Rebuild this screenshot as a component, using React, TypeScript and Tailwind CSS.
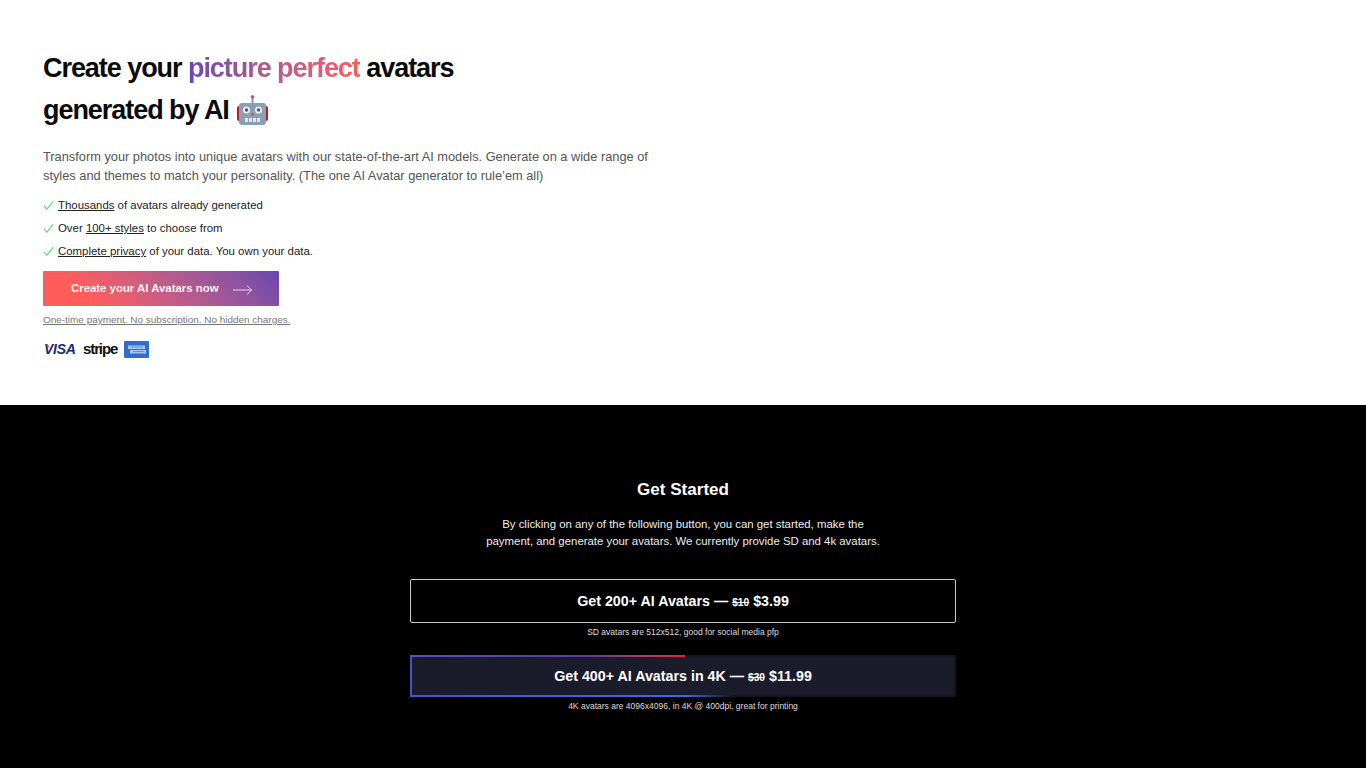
import React from "react";

function Check() {
  return (
    <svg className="w-[11px] h-[11px] shrink-0" viewBox="0 0 12 12" fill="none" stroke="#4ade80" strokeWidth="1.1">
      <path d="M1 6.5 L4.3 10 L11 1.5" />
    </svg>
  );
}

function Visa() {
  return (
    <span className="relative block w-[32px] h-[14px] text-[14px] leading-[14px] font-bold italic tracking-[-0.3px] text-[#1a2a6c]">
      VISA
      <svg width="6" height="5" viewBox="0 0 6 5" className="absolute left-0 top-[2px]">
        <path d="M0 0.5 H4 L6 4.5 C4.5 2.5 2.5 1.2 0 0.5 Z" fill="#c9433c" />
      </svg>
    </span>
  );
}

function Amex() {
  return (
    <svg width="25" height="17" viewBox="0 0 25 17" className="block">
      <rect width="25" height="17" rx="1" fill="#2f6fc9" />
      <rect x="4" y="4.5" width="17" height="3.5" fill="#a9c6ee" />
      <rect x="6" y="9" width="16" height="3.5" fill="#a9c6ee" />
      <rect x="7" y="5.5" width="12" height="1" fill="#5f90d8" />
      <rect x="9" y="10" width="11" height="1" fill="#5f90d8" />
    </svg>
  );
}

function Robot() {
  return (
    <svg width="33" height="32" viewBox="0 0 33 32" className="inline-block align-middle">
      <rect x="15.5" y="3" width="2" height="7" fill="#8899a6" />
      <circle cx="16.5" cy="3" r="2" fill="#8899a6" />
      <circle cx="16.5" cy="3" r="1" fill="#dd2e44" />
      <rect x="1" y="12" width="4" height="15" rx="2" fill="#be1931" />
      <rect x="28" y="12" width="4" height="15" rx="2" fill="#be1931" />
      <rect x="3" y="9" width="27" height="22" rx="3" fill="#8a9fb0" />
      <circle cx="10.5" cy="16" r="3.6" fill="#e8eef2" />
      <circle cx="22.5" cy="16" r="3.6" fill="#e8eef2" />
      <circle cx="10.5" cy="16" r="1.7" fill="#4b5c68" />
      <circle cx="22.5" cy="16" r="1.7" fill="#4b5c68" />
      <path d="M15 21.5 L16.5 18.5 L18 21.5 Z" fill="#dd2e44" />
      <rect x="9" y="24" width="15" height="4" fill="#dfe7ec" />
      <rect x="12" y="24" width="1" height="4" fill="#8a9fb0" />
      <rect x="16" y="24" width="1" height="4" fill="#8a9fb0" />
      <rect x="20" y="24" width="1" height="4" fill="#8a9fb0" />
    </svg>
  );
}

export default function App() {
  return (
    <div className="font-['Liberation_Sans',Arial,sans-serif] w-full min-h-[768px] bg-black">
      <section className="bg-white h-[405px] pt-[47px] pl-[43px]">
        <h1 className="text-[27px] leading-[42px] font-bold tracking-[-1.05px] text-[#0a0a0a]">
          <span className="block">
            Create your{" "}
            <span className="bg-gradient-to-r from-[#6b46b0] to-[#ff5c5c] bg-clip-text text-transparent">picture perfect</span>{" "}
            avatars
          </span>
          <span className="flex items-center gap-[7px]">
            generated by AI <Robot />
          </span>
        </h1>
        <p className="mt-[16px] w-[615px] text-[12.8px] leading-[19px] text-[#555]">
          Transform your photos into unique avatars with our state-of-the-art AI models. Generate on a wide range of styles and themes to match your personality. (The one AI Avatar generator to rule’em all)
        </p>
        <ul className="mt-[12px] flex flex-col gap-[7px] text-[11.42px] leading-[16px] text-[#222]">
          <li className="flex items-center gap-[4px]"><Check /><span><u>Thousands</u> of avatars already generated</span></li>
          <li className="flex items-center gap-[4px]"><Check /><span>Over <u>100+ styles</u> to choose from</span></li>
          <li className="flex items-center gap-[4px]"><Check /><span><u>Complete privacy</u> of your data. You own your data.</span></li>
        </ul>
        <a className="mt-[12px] flex w-[236px] h-[35px] items-center rounded-[1px] bg-linear-45 from-[#ff5c5c] from-20% to-[#6b46b0] to-100% pl-[28px] text-[11.4px] font-bold text-white/95">
          <span>Create your AI Avatars now</span>
          <svg width="20" height="10" viewBox="0 0 20 10" fill="none" stroke="#f5d5dd" strokeWidth="1" className="ml-[14px] mt-[2px]">
            <path d="M0 5 H18.5 M14 0.5 L18.5 5 L14 9.5" />
          </svg>
        </a>
        <p className="mt-[7px] text-[9.95px] leading-[13px] text-[#777] underline">One-time payment. No subscription. No hidden charges.</p>
        <div className="mt-[15px] flex items-center">
          <span className="ml-[1px] mb-[2px]"><Visa /></span>
          <span className="ml-[7px] mb-[2px] w-[33px] text-[15px] leading-[14px] font-bold tracking-[-1.1px] text-[#111]">stripe</span>
          <span className="ml-[8px]"><Amex /></span>
        </div>
      </section>
      <section className="bg-black h-[363px] pt-[74px] flex flex-col items-center text-white">
        <h2 className="text-[17.07px] leading-[22px] font-bold">Get Started</h2>
        <p className="mt-[15px] text-center text-[11.4px] leading-[17px] text-[#eee]">
          By clicking on any of the following button, you can get started, make the<br />
          payment, and generate your avatars. We currently provide SD and 4k avatars.
        </p>
        <a className="mt-[29px] flex h-[44px] w-[546px] items-center justify-center rounded-[2px] border border-[#c8c8c8] pt-[2px] text-[14.27px] font-bold">
          <span>Get 200+ AI Avatars — <s className="text-[10.2px]">$10</s> $3.99</span>
        </a>
        <p className="mt-[4px] text-[8.53px] leading-[10px] text-[#ddd]">SD avatars are 512x512, good for social media pfp</p>
        <a className="relative mt-[18px] flex h-[42px] w-[546px] items-center justify-center rounded-[2px] border-2 border-[#12131d] bg-[#1b1c2b] pt-[2px] text-[14.27px] font-bold">
          <span className="absolute -left-[2px] -top-[2px] h-[42px] w-[2px] bg-[#5050c0]" />
          <span className="absolute -left-[2px] -top-[2px] h-[2px] w-[275px] bg-gradient-to-r from-[#5a50b8] via-[#5a3f90] via-65% to-[#e01e3c]" />
          <span className="absolute -left-[2px] -bottom-[2px] h-[2px] w-[325px] bg-gradient-to-r from-[#5050c8] via-[#2f6fe0] via-85% to-transparent" />
          <span className="relative">Get 400+ AI Avatars in 4K — <s className="text-[10.2px]">$30</s> $11.99</span>
        </a>
        <p className="mt-[4px] text-[8.53px] leading-[10px] text-[#ddd]">4K avatars are 4096x4096, in 4K @ 400dpi, great for printing</p>
      </section>
    </div>
  );
}
